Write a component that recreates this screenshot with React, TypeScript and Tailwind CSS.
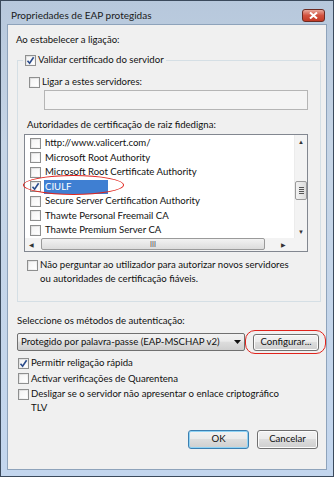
import React from "react";

const font = { fontFamily: 'Lato, "Noto Sans", "Liberation Sans", sans-serif' };

function Check({ on }: { on?: boolean }) {
  return (
    <span className="flex h-[11px] w-[11px] shrink-0 items-center justify-center border border-[#8e8f8f] bg-gradient-to-br from-[#dcdcdc] to-[#fbfbfb]">
      <span className="flex h-[7px] w-[7px] items-center justify-center bg-gradient-to-br from-[#f4f4f4] to-[#ffffff]">
        {on && (
          <svg width="9" height="9" viewBox="0 0 9 9" className="shrink-0">
            <path d="M1.5 4.8 L3.6 7.2 L7.6 1.2" fill="none" stroke="#2b4c8c" strokeWidth="1.6" />
          </svg>
        )}
      </span>
    </span>
  );
}

function CheckRow({ on, children, className = "" }: { on?: boolean; children: React.ReactNode; className?: string }) {
  return (
    <div className={"flex items-start gap-[2px] whitespace-nowrap leading-[14px] " + className}>
      <span className="mt-[1.5px]"><Check on={on} /></span>
      <span>{children}</span>
    </div>
  );
}

const certs = [
  "http://www.valicert.com/",
  "Microsoft Root Authority",
  "Microsoft Root Certificate Authority",
  "CIULF",
  "Secure Server Certification Authority",
  "Thawte Personal Freemail CA",
  "Thawte Premium Server CA",
];

function Btn({ children, def, className = "" }: { children: React.ReactNode; def?: boolean; className?: string }) {
  return (
    <div
      className={
        "flex items-center justify-center rounded-[3px] border " +
        (def ? "border-[#3c7fb1] shadow-[inset_0_0_0_1px_#8fd3f5] " : "border-[#707070] shadow-[inset_0_0_0_1px_#fcfcfc] ") +
        "bg-[linear-gradient(#f2f2f2_0%,#ebebeb_45%,#dddddd_50%,#cfcfcf_100%)] " +
        className
      }
    >
      {children}
    </div>
  );
}

export default function App() {
  return (
    <div style={font} className="relative flex h-[477px] w-[334px] flex-col border border-[#3b4a5c] bg-[linear-gradient(180deg,#b7c8dc_0%,#c6d5e6_30%,#c3d6ee_100%)] text-[9.6px] text-[#111]">
      {/* title bar */}
      <div className="flex h-[23px] items-center justify-between pl-[10px] pr-[8px]">
        <span className="mt-[5px] text-[10px] text-[#1a1a1a]">Propriedades de EAP protegidas</span>
        <div className="mt-[5px] flex h-[13px] w-[23px] items-center justify-center rounded-[3px] border border-[#6d2b22] bg-[linear-gradient(#e9a99c,#d2523f_50%,#c23a25)]">
          <svg width="9" height="7" viewBox="0 0 9 7">
            <path d="M1 0.5 L8 6.5 M8 0.5 L1 6.5" stroke="#fff" strokeWidth="2" />
          </svg>
        </div>
      </div>

      {/* client area */}
      <div className="mx-[6px] mb-[6px] flex flex-1 flex-col border border-[#8ea3bb] bg-[#f0f0f0]">
        <div className="ml-[8px] mt-[8px] leading-[14px]">Ao estabelecer a ligação:</div>

        <fieldset className="ml-[9px] mr-[5px] mt-[6px] border border-[#d5dfe5] pb-[15px]">
          <legend className="ml-[5px] px-[2px]">
            <CheckRow on className="leading-[13px]">Validar certificado do servidor</CheckRow>
          </legend>

          <CheckRow className="ml-[11px] mt-[8px]">Ligar a estes servidores:</CheckRow>
          <div className="ml-[26px] mt-[1px] h-[20px] w-[264px] border border-[#b5b5b5] bg-[#f4f4f4]" />

          <div className="ml-[9px] mt-[8px] leading-[14px]">Autoridades de certificação de raiz fidedigna:</div>

          <div className="relative ml-[6px] mt-[2px] flex h-[118px] w-[284px] flex-col border border-[#828790] bg-white">
            <div className="flex flex-1">
              <div className="flex-1 pt-[1px]">
                {certs.map((c, i) => (
                  <div key={c} className="flex h-[14.5px] items-center pl-[5px]">
                    <Check on={i === 3} />
                    <span
                      className={
                        "ml-[3px] flex h-[14.5px] items-center px-[1px] " +
                        (i === 3 ? "w-[64px] bg-[#3f7fd2] text-white" : "")
                      }
                    >
                      {c}
                    </span>
                  </div>
                ))}
              </div>
              {/* vertical scrollbar */}
              <div className="flex w-[13px] flex-col items-center border-l border-[#ececec] bg-[#f3f3f3]">
                <div className="flex h-[13px] items-center justify-center text-[6px] text-[#333]">▲</div>
                <div className="h-[33px]" />
                <div className="flex h-[19px] w-[12px] flex-col items-center justify-center gap-[1px] rounded-[2px] border border-[#9a9a9a] bg-[linear-gradient(90deg,#f2f2f2,#dcdcdc)]">
                  <span className="h-px w-[5px] bg-[#555]" />
                  <span className="h-px w-[5px] bg-[#555]" />
                  <span className="h-px w-[5px] bg-[#555]" />
                  <span className="h-px w-[5px] bg-[#555]" />
                </div>
                <div className="flex-1" />
                <div className="flex h-[13px] items-center justify-center text-[6px] text-[#333]">▼</div>
              </div>
            </div>
            {/* horizontal scrollbar */}
            <div className="flex h-[14px] items-center bg-[#f3f3f3]">
              <div className="flex w-[13px] justify-center text-[6px] text-[#333]">◀</div>
              <div className="ml-[3px] flex h-[12px] w-[224px] items-center justify-center rounded-[2px] border border-[#9a9a9a] bg-[linear-gradient(#f2f2f2,#dcdcdc)] text-[7px] leading-none text-[#444]">
                III
              </div>
              <div className="ml-[12px] flex w-[13px] justify-center text-[6px] text-[#333]">▶</div>
              <div className="flex-1 bg-[#f0f0f0]" />
            </div>
            {/* annotation */}
            <div className="pointer-events-none absolute left-[-2px] top-[40px] h-[20px] w-[101px] rounded-[50%] border-[1.5px] border-[#e0231c]" />
          </div>

          <CheckRow className="ml-[9px] mt-[6px]">
            Não perguntar ao utilizador para autorizar novos servidores
            <br />
            ou autoridades de certificação fiáveis.
          </CheckRow>
        </fieldset>

        <div className="ml-[9px] mt-[12px] leading-[14px]">Seleccione os métodos de autenticação:</div>

        <div className="ml-[9px] mt-[5px] flex items-center">
          <div className="flex h-[18px] w-[228px] items-center justify-between rounded-[2px] border border-[#707070] bg-[linear-gradient(#f2f2f2_0%,#ebebeb_45%,#dddddd_50%,#cfcfcf_100%)] pl-[3px] pr-[3px]">
            <span className="whitespace-nowrap">Protegido por palavra-passe (EAP-MSCHAP v2)</span>
            <svg width="7" height="4" viewBox="0 0 7 4">
              <path d="M0 0 H7 L3.5 4 Z" fill="#111" />
            </svg>
          </div>
          <div className="relative ml-[8px]">
            <Btn className="h-[17px] w-[66px]">Configurar...</Btn>
            <div className="pointer-events-none absolute left-[-8px] top-[-4px] h-[24px] w-[81px] rounded-[10px] border-[1.5px] border-[#e0231c]" />
          </div>
        </div>

        <div className="ml-[10px] mt-[5px] flex flex-col gap-[1.5px]">
          <CheckRow on>Permitir religação rápida</CheckRow>
          <CheckRow>Activar verificações de Quarentena</CheckRow>
          <CheckRow>
            Desligar se o servidor não apresentar o enlace criptográfico
            <br />
            TLV
          </CheckRow>
        </div>

        <div className="mr-[8px] mt-[15px] flex justify-end gap-[8px]">
          <Btn def className="h-[19px] w-[61px]">OK</Btn>
          <Btn className="h-[19px] w-[61px]">Cancelar</Btn>
        </div>
      </div>
    </div>
  );
}
